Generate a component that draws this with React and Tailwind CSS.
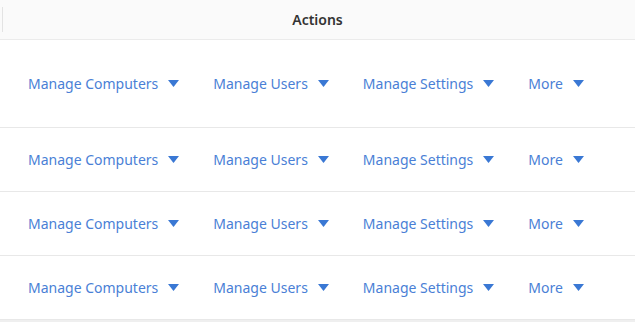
const actions = ["Manage Computers", "Manage Users", "Manage Settings", "More"];

function Caret() {
  return (
    <svg width="11" height="7" viewBox="0 0 11 7" className="shrink-0">
      <path d="M0 0 H11 L5.5 7 Z" fill="#3a78d4" />
    </svg>
  );
}

function ActionRow({ tall }) {
  return (
    <div
      className={`flex items-center gap-[34px] pl-[28px] border-b border-[#e8e8e8] ${
        tall ? "h-[88px]" : "h-[64px]"
      }`}
    >
      {actions.map((label) => (
        <button key={label} className="flex items-center gap-[10px] text-[14px] text-[#4a7fd6]">
          {label}
          <Caret />
        </button>
      ))}
    </div>
  );
}

export default function App() {
  return (
    <div className="w-[635px] h-[322px] bg-[#efefef] overflow-hidden font-['Noto_Sans',sans-serif]">
      {/* Header */}
      <div className="h-[40px] bg-[#fafafa] border-b border-[#ebebeb] flex items-center relative">
        <span className="absolute left-[2px] top-[7px] h-[25px] border-l border-[#e3e3e3]" />
        <div className="flex-1 text-center text-[14px] font-semibold text-[#333]">Actions</div>
      </div>

      {/* Rows */}
      <div className="bg-white">
        <ActionRow tall />
        <ActionRow />
        <ActionRow />
        <ActionRow />
      </div>
    </div>
  );
}
